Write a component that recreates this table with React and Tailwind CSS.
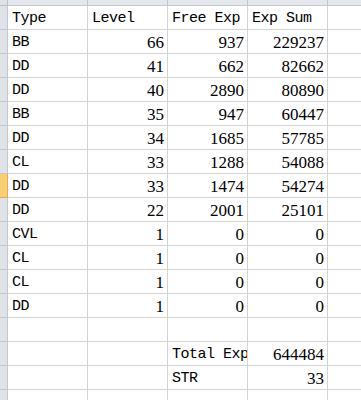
const rows = [
  ["Type", "Level", "Free Exp", "Exp Sum"],
  ["BB", 66, 937, 229237],
  ["DD", 41, 662, 82662],
  ["DD", 40, 2890, 80890],
  ["BB", 35, 947, 60447],
  ["DD", 34, 1685, 57785],
  ["CL", 33, 1288, 54088],
  ["DD", 33, 1474, 54274],
  ["DD", 22, 2001, 25101],
  ["CVL", 1, 0, 0],
  ["CL", 1, 0, 0],
  ["CL", 1, 0, 0],
  ["DD", 1, 0, 0],
  ["", "", "", ""],
  ["", "", "Total Exp", 644484],
  ["", "", "STR", 33],
  ["", "", "", ""],
];

const letters = ["A", "B", "C", "D", "E"];

function Cell({ value, last }) {
  const isNum = typeof value === "number";
  return (
    <div
      className={`${last ? "w-[34px]" : "w-[80px]"} h-6 shrink-0 border-r border-b border-[#d4d4d4] overflow-hidden whitespace-nowrap pt-[3px] leading-[20px] text-black ${
        isNum
          ? "text-right pr-[3px] text-[17px] font-['Liberation_Serif',serif]"
          : "text-left pl-[4px] text-[15px] tracking-[-0.5px] font-['Liberation_Mono',monospace]"
      }`}
    >
      {value}
    </div>
  );
}

export default function App() {
  return (
    <div className="w-[361px] h-[400px] overflow-hidden bg-white font-['Liberation_Serif',serif]">
      <div className="flex h-[6px]">
        <div className="w-[8px] shrink-0 bg-[#dfe3e8] border-r border-b border-[#b9c0c8]" />
        {letters.map((l, i) => (
          <div
            key={l}
            className={`${i === 4 ? "w-[34px]" : "w-[80px]"} shrink-0 bg-[#e4e7eb] border-r border-b border-[#c3c8ce] overflow-hidden text-center`}
          >
            <div className="-mt-[9px] text-[12px] leading-[11px] text-[#5a5a5a]">{l}</div>
          </div>
        ))}
      </div>
      {rows.map((r, ri) => (
        <div key={ri} className="flex h-6">
          <div
            className={`w-[8px] shrink-0 border-r border-b ${
              ri === 7 ? "bg-[#f8cf73] border-[#e2ac4a]" : "bg-[#dfe3e8] border-[#c3c8ce]"
            }`}
          />
          {r.map((v, ci) => (
            <Cell key={ci} value={v} />
          ))}
          <Cell value="" last />
        </div>
      ))}
    </div>
  );
}
